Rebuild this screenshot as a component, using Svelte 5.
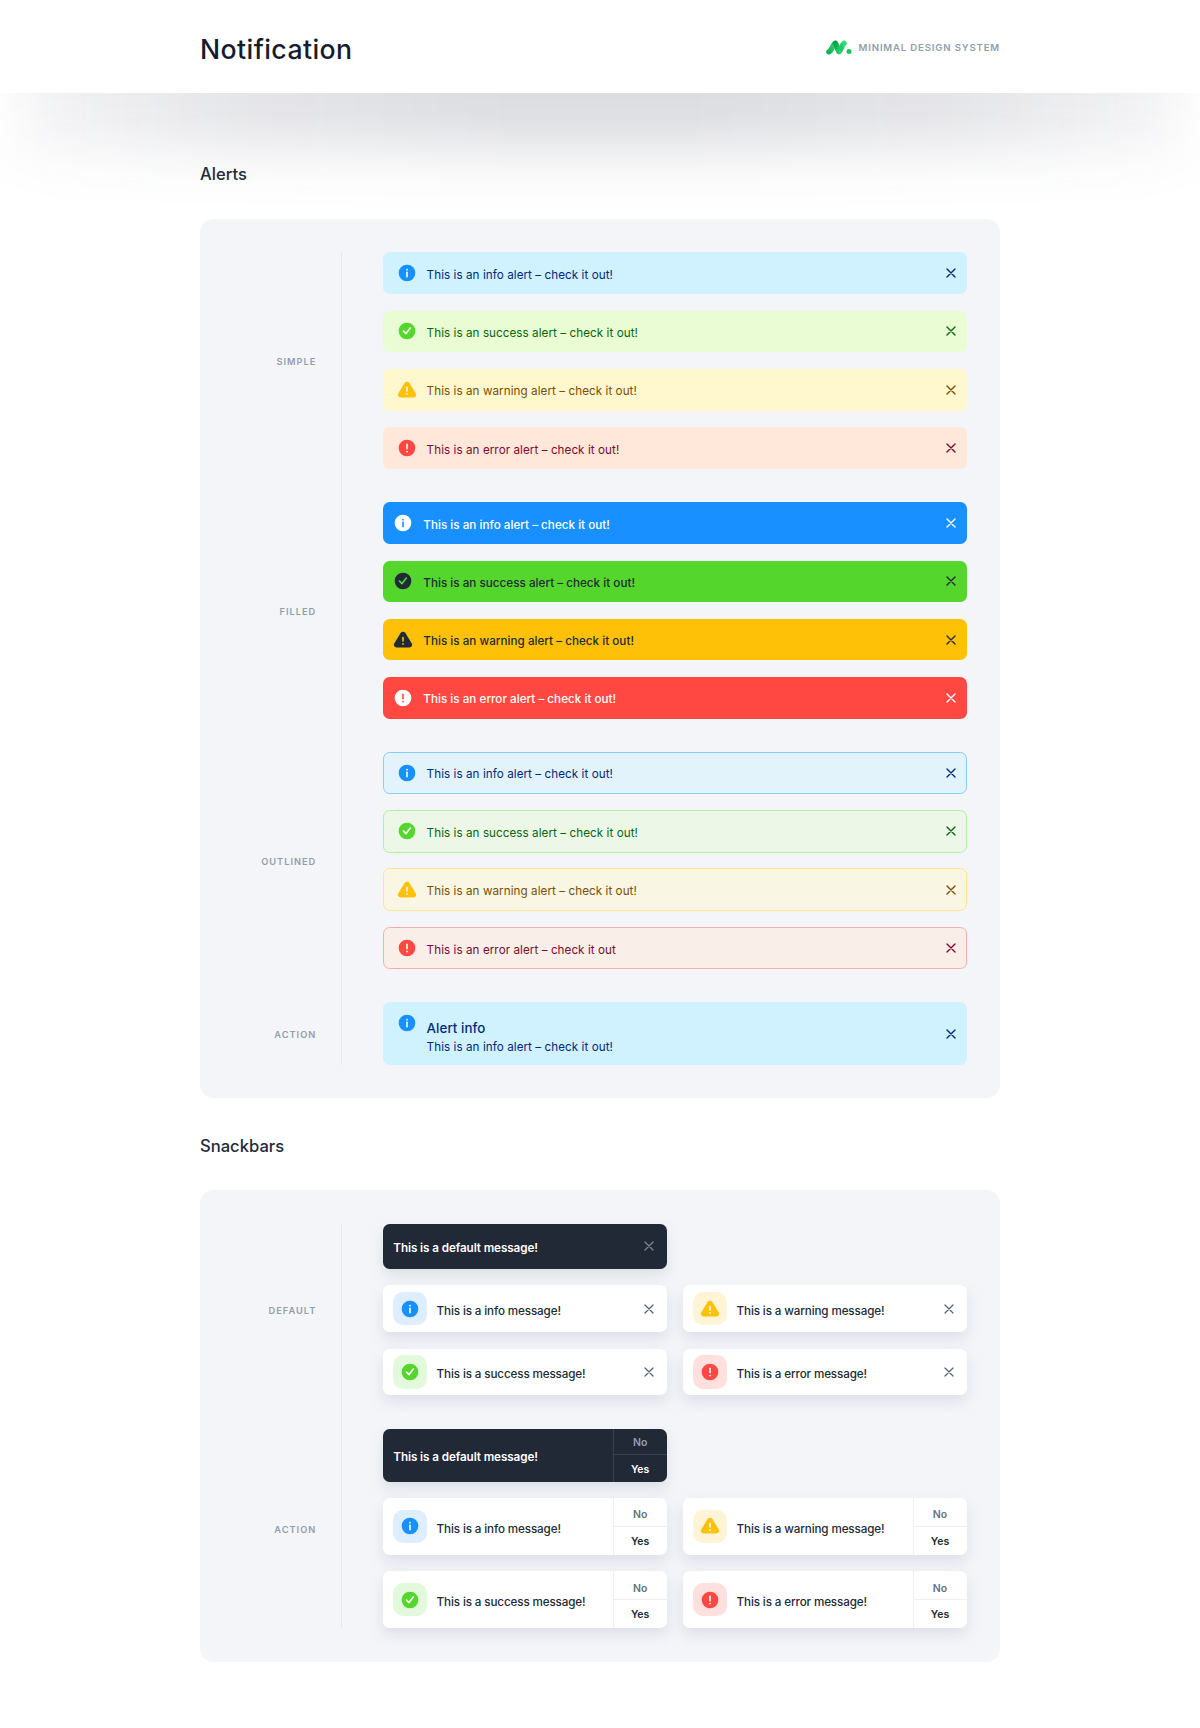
<script>
  const simple = [
    { kind: 'info', text: 'This is an info alert – check it out!' },
    { kind: 'success', text: 'This is an success alert – check it out!' },
    { kind: 'warning', text: 'This is an warning alert – check it out!' },
    { kind: 'error', text: 'This is an error alert – check it out!' }
  ];
  const outlined = simple.map((a) =>
    a.kind === 'error' ? { ...a, text: 'This is an error alert – check it out' } : a
  );
  const alertGroups = [
    { label: 'Simple', style: 'simple', items: simple },
    { label: 'Filled', style: 'filled', items: simple },
    { label: 'Outlined', style: 'outlined', items: outlined }
  ];
  const snacks = [
    { kind: 'info', text: 'This is a info message!' },
    { kind: 'warning', text: 'This is a warning message!' },
    { kind: 'success', text: 'This is a success message!' },
    { kind: 'error', text: 'This is a error message!' }
  ];
</script>

{#snippet icon(kind)}
  <svg class="icon" viewBox="0 0 24 24" aria-hidden="true">
    {#if kind === 'warning'}
      <path class="shape" d="M22.56 16.3 14.89 3.58a3.43 3.43 0 0 0-5.78 0L1.44 16.3a3 3 0 0 0-.05 3A3.37 3.37 0 0 0 4.33 21h15.34a3.37 3.37 0 0 0 2.94-1.66 3 3 0 0 0-.05-3.04Z" />
      <path class="mark" d="M12 8.9v4.2" />
      <circle class="dot" cx="12" cy="16.7" r="1.05" />
    {:else}
      <circle class="shape" cx="12" cy="12" r="10" />
      {#if kind === 'success'}
        <path class="mark" d="m7.8 12.2 3 2.9 5.2-6.7" />
      {:else if kind === 'info'}
        <path class="mark" d="M12 11.2v5.2" />
        <circle class="dot" cx="12" cy="8" r="1.05" />
      {:else}
        <path class="mark" d="M12 7.6v5.2" />
        <circle class="dot" cx="12" cy="16.2" r="1.05" />
      {/if}
    {/if}
  </svg>
{/snippet}

{#snippet cross()}
  <svg class="cross" viewBox="0 0 10 10" aria-hidden="true"><path d="m1 1 8 8M9 1 1 9" /></svg>
{/snippet}

{#snippet snack(s, action)}
  <div class="snack" class:action>
    <span class="tile {s.kind}">{@render icon(s.kind)}</span>
    <span class="msg">{s.text}</span>
    {#if action}
      <div class="choices"><span class="no">No</span><span class="yes">Yes</span></div>
    {:else}
      {@render cross()}
    {/if}
  </div>
{/snippet}

<div class="shade"></div>
<header>
  <div class="wrap bar">
    <h1>Notification</h1>
    <div class="brand">
      <svg class="logo" viewBox="0 0 26 15" aria-hidden="true">
        <defs>
          <linearGradient id="leg" x1="0" y1="1" x2="1" y2="0">
            <stop offset="0" stop-color="#14b053" /><stop offset="1" stop-color="#35dd7a" />
          </linearGradient>
          <linearGradient id="fold" x1="0" y1="0" x2="1" y2="1">
            <stop offset="0" stop-color="#0fa04a" /><stop offset="1" stop-color="#27cf69" />
          </linearGradient>
        </defs>
        <path d="M2.9 11.800C5.400 11 6.800 5 9.200 3.300" stroke="url(#leg)" />
        <path d="M13 11.400C15.200 10.100 16 5 18 3.400" stroke="url(#leg)" />
        <path d="M9.400 3.300C11 5.200 11.400 9.500 13 11.400" stroke="url(#fold)" />
        <circle cx="23" cy="11.500" r="2.500" />
      </svg>
      <span>Minimal Design System</span>
    </div>
  </div>
</header>

<main class="wrap">
  <h2>Alerts</h2>
  <section class="panel alerts">
    <div class="groups">
      {#each alertGroups as g}
        <div class="group">
          <div class="label">{g.label}</div>
          <div class="stack">
            {#each g.items as a}
              <div class="alert {g.style} {a.kind}">
                {@render icon(a.kind)}
                <span class="text">{a.text}</span>
                {@render cross()}
              </div>
            {/each}
          </div>
        </div>
      {/each}
      <div class="group">
        <div class="label">Action</div>
        <div class="stack">
          <div class="alert simple info tall">
            {@render icon('info')}
            <div class="text">
              <strong>Alert info</strong>
              <span>This is an info alert – check it out!</span>
            </div>
            {@render cross()}
          </div>
        </div>
      </div>
    </div>
  </section>

  <h2 class="second">Snackbars</h2>
  <section class="panel snacks">
    <div class="groups">
      {#each [false, true] as action}
        <div class="group">
          <div class="label">{action ? 'Action' : 'Default'}</div>
          <div class="grid">
            <div class="snack dark" class:action>
              <span class="msg">This is a default message!</span>
              {#if action}
                <div class="choices"><span class="no">No</span><span class="yes">Yes</span></div>
              {:else}
                {@render cross()}
              {/if}
            </div>
            <i></i>
            {#each snacks as s}
              {@render snack(s, action)}
            {/each}
          </div>
        </div>
      {/each}
    </div>
  </section>
</main>

<style>
  :global(body) {
    background: #fff;
    color: #212b36;
    font-family: Inter, 'Liberation Sans', sans-serif;
    overflow: hidden;
  }
  .wrap { width: 800px; margin: 0 auto; }
  /* Soft shadow that the header casts on the page */
  .shade {
    position: absolute; z-index: -1; top: 20px; left: 20px; right: 20px; height: 129px;
    background: linear-gradient(90deg, rgba(44, 46, 84, 0.05), rgba(44, 48, 76, 0.125) 18%, rgba(40, 46, 66, 0.165) 42% 58%, rgba(44, 48, 76, 0.125) 82%, rgba(44, 46, 84, 0.05));
    filter: blur(28px);
  }
  header { height: 93.3px; background: #fff; }
  .bar { display: flex; justify-content: space-between; align-items: center; height: 100%; }
  h1 { margin: 5px 0 0; font-size: 26.67px; line-height: 40px; font-weight: 500; letter-spacing: 0.4px; color: #161c2d; }
  .brand {
    display: flex; align-items: center; gap: 7px; padding-top: 2px;
    font-size: 9.6px; font-weight: 600; letter-spacing: 0.83px; text-transform: uppercase; color: #919eab;
  }
  .logo { width: 26px; height: 15px; fill: none; stroke-width: 5.5; stroke-linecap: round; }
  .logo circle { fill: #1cc45c; }
  h2 { margin: 0; padding-top: 68px; height: 57.7px; line-height: 27px; font-size: 16.6px; font-weight: 500; }
  h2.second { padding-top: 34.7px; height: 57.6px; }
  .panel { box-sizing: border-box; background: #f4f5f9; border-radius: 13.3px; padding: 33.3px; }
  .alerts { height: 879px; }
  .snacks { height: 471.5px; }
  .groups {
    display: flex; flex-direction: column; gap: 33.33px;
    background: linear-gradient(#e4e8ed, #e4e8ed) 108px 0 / 1px 100% no-repeat;
  }
  .group { display: grid; grid-template-columns: 83px 583.3px; column-gap: 67px; align-items: center; }
  .label {
    text-align: right; font-size: 9.25px; line-height: 14px; font-weight: 600; padding-top: 3px;
    letter-spacing: 1px; text-transform: uppercase; color: #919eab;
  }
  .stack { display: flex; flex-direction: column; gap: 16.67px; }
  .alert {
    box-sizing: border-box; height: 41.67px; padding: 0 10.5px 0 13.3px; border-radius: 6.67px;
    display: flex; align-items: center; font-size: 11.67px; letter-spacing: 0.06px;
  }
  .alert .icon { margin-right: 10px; }
  .icon { width: 20px; height: 20px; flex: none; }
  .shape { fill: var(--c); }
  .mark { fill: none; stroke: var(--m, #fff); stroke-width: 1.9; stroke-linecap: round; stroke-linejoin: round; }
  .dot { fill: var(--m, #fff); }
  .text { flex: 1; padding-top: 3px; }
  .cross { width: 10px; height: 10px; flex: none; fill: none; stroke: currentColor; stroke-width: 1.4; stroke-linecap: round; }
  .info { --c: #1890ff; color: #04297a; background: #d0f2ff; }
  .success { --c: #54d62c; color: #08660d; background: #e9fcd4; }
  .warning { --c: #ffc107; color: #7a4f01; background: #fff7cd; }
  .error { --c: #ff4842; color: #7a0c2e; background: #ffe7d9; }
  .filled { background: var(--c); padding-left: 10px; font-weight: 500; letter-spacing: 0.02px; }
  .filled .shape { fill: currentColor; }
  .filled .mark { stroke: var(--c); }
  .filled .dot { fill: var(--c); }
  .filled.info, .filled.error { color: #fff; }
  .filled.success, .filled.warning { color: #212b36; }
  .outlined { border: 1px solid; margin: -0.4px; height: 42.5px; padding: 0 9.9px 0 12.7px; }
  .outlined.info { background: #e3f3fb; border-color: #86ccff; }
  .outlined.success { background: #edf7e8; border-color: #b4eea0; }
  .outlined.warning { background: #f9f6e3; border-color: #ffe48b; }
  .outlined.error { background: #faeee9; border-color: #ffaba6; }
  .tall { height: 62.5px; }
  .tall .icon { align-self: flex-start; margin-top: 11px; }
  .tall .text { display: flex; flex-direction: column; line-height: 18.5px; padding-top: 8px; }
  .tall strong { font-size: 13.33px; line-height: 20px; font-weight: 500; }

  .grid { display: grid; grid-template-columns: 283.3px 283.3px; gap: 16.67px; }
  .snack {
    box-sizing: border-box; height: 46.67px; padding: 0 12.5px 0 10px; border-radius: 6.67px;
    display: flex; align-items: center; background: #fff; font-size: 11.67px; font-weight: 500;
    letter-spacing: -0.13px; box-shadow: 0 7px 14px rgba(145, 158, 171, 0.24);
  }
  .snack.action { height: 56.67px; padding-right: 0; }
  .snack.dark { height: 45px; background: #212936; color: #fff; font-weight: 600; letter-spacing: -0.08px; }
  .snack.dark.action { height: 53px; }
  .snack .cross { color: #566574; stroke-width: 1.3; }
  .snack.dark .cross { color: #7b8791; }
  .msg { flex: 1; padding-top: 4px; }
  .dark .msg { padding-top: 3px; }
  .dark.action .msg { padding-top: 4px; }
  .tile {
    width: 33.3px; height: 33.3px; margin-right: 10px; border-radius: 10px;
    display: flex; align-items: center; justify-content: center;
  }
  .tile.info { background: #dceeff; }
  .tile.success { background: #e3f9dc; }
  .tile.warning { background: #fff5d6; }
  .tile.error { background: #ffe0df; }
  .choices {
    align-self: stretch; width: 53px; display: grid; grid-template-rows: 1fr 1fr;
    text-align: center; font-size: 10.5px; font-weight: 600; letter-spacing: 0; border-left: 1px solid #edeff2;
  }
  .choices span { display: flex; align-items: center; justify-content: center; }
  .choices .no { color: #637381; border-bottom: 1px solid #edeff2; padding-top: 6px; }
  .choices .yes { padding-top: 2px; }
  .dark .choices, .dark .choices .no { border-color: #37424e; }
  .dark .choices .no { color: #919eab; padding-top: 3px; }
  .dark .choices .yes { padding-top: 3px; }
</style>
